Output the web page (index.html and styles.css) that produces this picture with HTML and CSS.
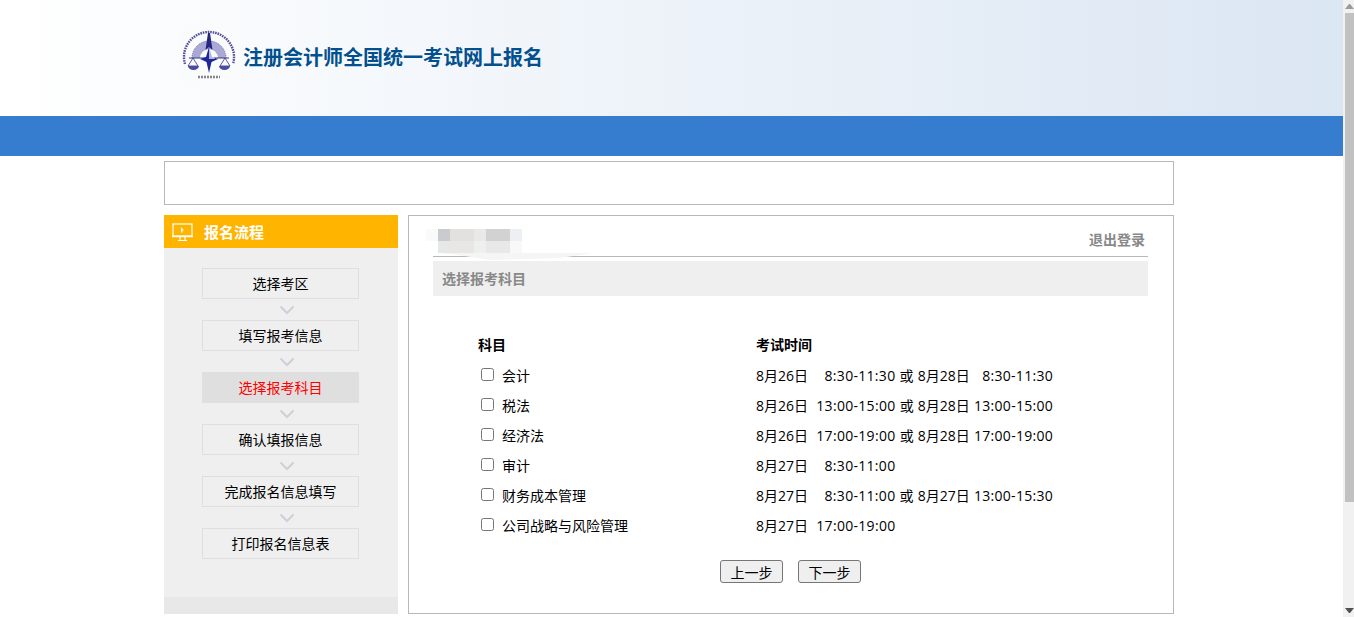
FILE: index.html
```html
<!DOCTYPE html>
<html lang="zh-CN">
<head>
<meta charset="utf-8">
<title>注册会计师全国统一考试网上报名</title>
<link rel="stylesheet" href="styles.css">
</head>
<body>
<div class="shell">
  <div class="page">
    <header class="banner">
      <svg class="logo" width="60" height="60" viewBox="0 0 60 60" aria-hidden="true">
        <rect width="60" height="60" fill="#fafbfd"/>
        <g class="logo-art">
          <path d="M6 38A25 25 0 1 1 54 38" fill="none" stroke="#3f3d8c" stroke-width="2.4" stroke-dasharray="1.6 .9" opacity=".9"/>
          <path d="M13 32A17 17 0 0 1 47 32H39A9 9 0 0 0 21 32Z" fill="#8f8dc8" opacity=".75"/>
          <path d="M13 32A17 17 0 0 1 47 32" fill="none" stroke="#5c5aa8" stroke-width=".8" stroke-dasharray="1 1"/>
          <path d="M10 32H50" stroke="#34348c" stroke-width="1"/>
          <path d="M14 32L9 40H19ZM46 32L41 40H51Z" fill="none" stroke="#34348c" stroke-width=".8"/>
          <path d="M9 40A5.500 4 0 0 0 20 40ZM40 40A5.500 4 0 0 0 51 40Z" fill="#4a4aa0"/>
          <path d="M29 7L31 7L33.500 24L30 21L26.500 24Z" fill="#26267e"/>
          <path d="M30 21L33 31L39 33L32.500 36L30 47L27.500 36L21 33L27 31Z" fill="#1d2a96"/>
          <path d="M30 22V33L36 33Z" fill="#fff" opacity=".65"/>
          <path d="M19 51H41" stroke="#555" stroke-width="2.400" stroke-dasharray="2 1" opacity=".7"/>
        </g>
      </svg>
      <h1 class="site-title">注册会计师全国统一考试网上报名</h1>
    </header>
    <div class="navbar"></div>
    <div class="container">
      <div class="notice"></div>
      <div class="columns">
        <aside class="sidebar">
          <div class="side-head">
            <svg class="side-icon" width="22" height="19" viewBox="0 0 22 19" aria-hidden="true">
              <rect x="1" y="1" width="19" height="12" fill="none" stroke="#fff" stroke-width="1.2"/>
              <path d="M0 13.5H21" stroke="#fff" stroke-width="1.4"/>
              <path d="M8 14V17M13 14V17M6 17.5H15" stroke="#fff" stroke-width="1.2" fill="none"/>
              <path d="M9 4L12 7.5L10.500 7.500L10.500 9.500L9 9.500Z" fill="#fff"/>
            </svg>
            <span class="side-title">报名流程</span>
          </div>
          <ol class="steps">
            <li class="step">选择考区</li>
            <li class="chev"><svg width="16" height="10" viewBox="0 0 16 10"><path d="M1.500 1.500L8 8L14.500 1.500" fill="none" stroke="#ccd0d8" stroke-width="2"/></svg></li>
            <li class="step">填写报考信息</li>
            <li class="chev"><svg width="16" height="10" viewBox="0 0 16 10"><path d="M1.500 1.500L8 8L14.500 1.500" fill="none" stroke="#ccd0d8" stroke-width="2"/></svg></li>
            <li class="step step-on">选择报考科目</li>
            <li class="chev"><svg width="16" height="10" viewBox="0 0 16 10"><path d="M1.500 1.500L8 8L14.500 1.500" fill="none" stroke="#ccd0d8" stroke-width="2"/></svg></li>
            <li class="step">确认填报信息</li>
            <li class="chev"><svg width="16" height="10" viewBox="0 0 16 10"><path d="M1.500 1.500L8 8L14.500 1.500" fill="none" stroke="#ccd0d8" stroke-width="2"/></svg></li>
            <li class="step">完成报名信息填写</li>
            <li class="chev"><svg width="16" height="10" viewBox="0 0 16 10"><path d="M1.500 1.500L8 8L14.500 1.500" fill="none" stroke="#ccd0d8" stroke-width="2"/></svg></li>
            <li class="step">打印报名信息表</li>
          </ol>
          <div class="side-foot"></div>
        </aside>
        <main class="panel">
          <div class="user-row">
            <a class="logout">退出登录</a>
            <svg class="redact" width="175" height="46" viewBox="0 0 175 46" aria-hidden="true">
              <g class="redact-blocks">
                <rect x="4" y="13" width="12" height="12" fill="#fafafa"/>
                <rect x="16" y="13" width="12" height="12" fill="#c9cbce"/>
                <rect x="28" y="13" width="24" height="12" fill="#e2e1df"/>
                <rect x="52" y="13" width="12" height="12" fill="#e9e9e9"/>
                <rect x="64" y="13" width="24" height="12" fill="#d2d2d3"/>
                <rect x="88" y="13" width="12" height="12" fill="#eeeff2"/>
                <rect x="16" y="25" width="12" height="12" fill="#e6e7e7"/>
                <rect x="28" y="25" width="24" height="12" fill="#e8e7e5"/>
                <rect x="52" y="25" width="12" height="12" fill="#eef0f0"/>
                <rect x="64" y="25" width="24" height="12" fill="#e8e8e9"/>
                <rect x="88" y="25" width="12" height="12" fill="#f8f8f8"/>
              </g>
              <path d="M18 37H171L138 42L68 44L43 40Z" fill="#f5f5f5"/>
            </svg>
          </div>
          <div class="section-bar">选择报考科目</div>
          <table class="subjects">
            <thead>
              <tr><th class="col-a">科目</th><th>考试时间</th></tr>
            </thead>
            <tbody>
              <tr><td><label class="subj"><input type="checkbox"><span>会计</span></label></td><td class="time">8月26日    <span class="hm">8:30-11:30</span> 或 8月28日   <span class="hm">8:30-11:30</span></td></tr>
              <tr><td><label class="subj"><input type="checkbox"><span>税法</span></label></td><td class="time">8月26日  <span class="hm">13:00-15:00</span> 或 8月28日 <span class="hm">13:00-15:00</span></td></tr>
              <tr><td><label class="subj"><input type="checkbox"><span>经济法</span></label></td><td class="time">8月26日  <span class="hm">17:00-19:00</span> 或 8月28日 <span class="hm">17:00-19:00</span></td></tr>
              <tr><td><label class="subj"><input type="checkbox"><span>审计</span></label></td><td class="time">8月27日    <span class="hm">8:30-11:00</span></td></tr>
              <tr><td><label class="subj"><input type="checkbox"><span>财务成本管理</span></label></td><td class="time">8月27日    <span class="hm">8:30-11:00</span> 或 8月27日 <span class="hm">13:00-15:30</span></td></tr>
              <tr><td><label class="subj"><input type="checkbox"><span>公司战略与风险管理</span></label></td><td class="time">8月27日  <span class="hm">17:00-19:00</span></td></tr>
            </tbody>
          </table>
          <div class="actions">
            <button class="btn" type="button">上一步</button>
            <button class="btn" type="button">下一步</button>
          </div>
        </main>
      </div>
    </div>
  </div>
  <div class="scrollbar" aria-hidden="true">
    <div class="arrow-up"></div>
    <div class="thumb"></div>
    <div class="track"></div>
    <div class="arrow-down"></div>
  </div>
</div>
</body>
</html>
```
FILE: styles.css
```css
* { box-sizing: border-box; }
html, body { margin: 0; height: 100%; overflow: hidden; background: #fff; }
body { font: 14px/20px "Open Sans", "Noto Sans CJK SC", sans-serif; color: #000; }
.shell { display: flex; height: 617px; }
.page { width: 1343px; flex: none; overflow: hidden; }

.banner {
  height: 116px;
  padding: 26px 0 0 179px;
  display: flex;
  align-items: flex-start;
  background: linear-gradient(90deg, #fff 0%, #dbe6f3 100%);
}
.logo { flex: none; }
.logo-art { filter: blur(.3px); }
.site-title {
  margin: 17px 0 0 4px;
  font: bold 20px/28px "Noto Sans CJK SC", sans-serif;
  color: #03508e;
}
.navbar { height: 40px; background: #377dcf; }

.container { width: 1010px; margin: 5px 0 0 164px; }
.notice { height: 44px; border: 1px solid #b8b8b8; }
.columns { display: flex; gap: 10px; margin-top: 10px; }

.sidebar { width: 234px; flex: none; height: 399px; background: #efefef; display: flex; flex-direction: column; }
.side-head { height: 33px; background: #ffb400; display: flex; align-items: center; padding-left: 8px; }
.side-icon { flex: none; margin-top: 2px; }
.side-title { margin-left: 10px; font: bold 15px/20px "Noto Sans CJK SC", sans-serif; color: #fff; }
.steps { list-style: none; margin: 20px 0 0; padding: 0 0 0 38px; flex: 1; }
.step {
  width: 157px;
  height: 31px;
  border: 1px solid #dfdfdf;
  text-align: center;
  line-height: 28px;
  font-family: "Noto Sans CJK SC", sans-serif;
}
.step-on { background: #dfdfdf; color: #f00; }
.chev { height: 21px; width: 157px; display: flex; justify-content: center; padding: 6px 0 0 13px; }
.chev svg { display: block; }
.side-foot { height: 17px; background: #e8e8e8; }

.panel { width: 766px; flex: none; height: 399px; border: 1px solid #b8b8b8; padding: 0 25px 0 24px; }
.user-row { height: 41px; border-bottom: 1px solid #b8b8b8; position: relative; display: flex; justify-content: flex-end; padding: 13px 3px 0 0; }
.redact { position: absolute; left: -11px; top: 0; }
.redact-blocks { filter: blur(.5px); }
.logout { font: bold 14px/20px "Noto Sans CJK SC", sans-serif; color: #888; }
.section-bar {
  margin-top: 4px;
  height: 35px;
  background: #efefef;
  padding-left: 9px;
  font: bold 14px/34px "Noto Sans CJK SC", sans-serif;
  color: #888;
}
.subjects { border-collapse: collapse; margin: 34px 0 0 45px; }
.subjects th { text-align: left; font: bold 14px/28px "Noto Sans CJK SC", sans-serif; padding: 0 0 2px; height: 30px; }
.subjects td { padding: 0; height: 30px; }
.col-a { width: 278px; }
.subj { display: flex; align-items: center; font-family: "Noto Sans CJK SC", sans-serif; }
.subj input { margin: 0 8px 2px 3px; width: 13px; height: 13px; flex: none; }
.subjects .time { white-space: pre; word-spacing: .5px; padding-top: 2px; }
.hm { letter-spacing: .3px; }
.actions { display: flex; justify-content: center; gap: 15px; margin-top: 20px; }
.btn {
  width: 63px;
  height: 23px;
  padding: 0;
  border: 1px solid #767676;
  border-radius: 3px;
  background: #efefef;
  color: #000;
  font: 14px/20px "Noto Sans CJK SC", sans-serif;
}

.scrollbar { width: 11px; flex: none; background: #f1f1f1; display: flex; flex-direction: column; align-items: flex-end; }
.arrow-up { border-left: 4px solid transparent; border-right: 4px solid transparent; border-bottom: 5px solid #9a9a9a; height: 0; width: 9px; flex: none; margin: 4px 0; }
.thumb { width: 9px; height: 489px; flex: none; background: #c1c1c1; }
.track { flex: 1; }
.arrow-down { border-left: 4px solid transparent; border-right: 4px solid transparent; border-top: 5px solid #505050; height: 0; width: 9px; flex: none; margin-bottom: 4px; }
```
